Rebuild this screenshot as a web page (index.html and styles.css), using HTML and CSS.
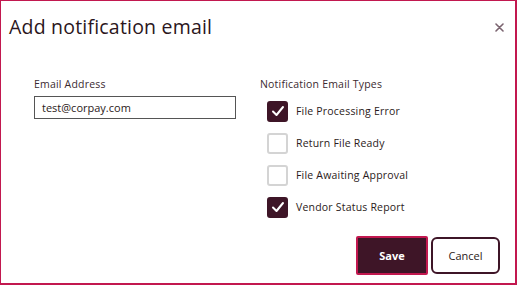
FILE: index.html
```html
<!DOCTYPE html>
<html>
<head>
<meta charset="utf-8">
<link rel="stylesheet" href="styles.css">
</head>
<body>
<div class="dialog">
  <div class="header">
    <h1 class="title">Add notification email</h1>
    <button class="close" aria-label="Close">
      <svg width="9" height="9" viewBox="0 0 9 9"><path d="M1 1L8 8M8 1L1 8" stroke="#7b6470" stroke-width="1.6" stroke-linecap="round"/></svg>
    </button>
  </div>
  <div class="body">
    <div class="col-email">
      <label class="label">Email Address</label>
      <div class="input">test@corpay.com</div>
    </div>
    <div class="col-types">
      <div class="label types-label">Notification Email Types</div>
      <div class="list">
        <div class="row"><span class="cb checked"><svg width="14" height="12" viewBox="0 0 14 12"><path d="M2 6.5L5.5 10L12 2" fill="none" stroke="#fff" stroke-width="2" stroke-linecap="round" stroke-linejoin="round"/></svg></span><span class="row-text">File Processing Error</span></div>
        <div class="row"><span class="cb"></span><span class="row-text">Return File Ready</span></div>
        <div class="row"><span class="cb"></span><span class="row-text">File Awaiting Approval</span></div>
        <div class="row"><span class="cb checked"><svg width="14" height="12" viewBox="0 0 14 12"><path d="M2 6.5L5.5 10L12 2" fill="none" stroke="#fff" stroke-width="2" stroke-linecap="round" stroke-linejoin="round"/></svg></span><span class="row-text">Vendor Status Report</span></div>
      </div>
    </div>
  </div>
  <div class="footer">
    <button class="btn save">Save</button>
    <button class="btn cancel">Cancel</button>
  </div>
</div>
</body>
</html>
```
FILE: styles.css
```css
* { box-sizing: border-box; }
html, body { margin: 0; padding: 0; background: #fff; }
body { font-family: "Open Sans", "DejaVu Sans", sans-serif; color: #2d1a22; }
.dialog {
  width: 517px;
  height: 285px;
  border: 1px solid #c2184f;
  border-right-width: 2px;
  border-bottom-width: 2px;
  display: flex;
  flex-direction: column;
}
.header {
  display: flex;
  justify-content: space-between;
  align-items: center;
  padding: 10px 9px 0 8px;
  height: 40px;
}
.title {
  margin: 0;
  font-size: 19.5px;
  font-weight: 500;
  color: #2b1620;
  letter-spacing: 0.2px;
}
.close {
  border: 0;
  background: none;
  padding: 0;
  width: 14px;
  height: 14px;
  display: flex;
  align-items: center;
  justify-content: center;
  margin-top: 2px;
}
.body {
  display: flex;
  padding: 36px 0 0 33px;
}
.col-email { width: 226px; display: flex; flex-direction: column; }
.label {
  font-size: 10.5px;
  font-weight: 500;
  color: #3b2a30;
  letter-spacing: 0.2px;
}
.input {
  margin-top: 5px;
  width: 202px;
  height: 23px;
  border: 1px solid #555;
  font-size: 11px;
  padding: 0 7px;
  display: flex;
  align-items: center;
  color: #2b1a20;
}
.list { display: flex; flex-direction: column; margin-top: 4px; padding-left: 7px; }
.row { display: flex; align-items: center; height: 32px; }
.cb {
  width: 21px;
  height: 21px;
  border: 2px solid #d4d4d4;
  border-radius: 3px;
  display: flex;
  align-items: center;
  justify-content: center;
}
.cb.checked { background: #3e1527; border-color: #3e1527; }
.row-text { margin-left: 8px; font-size: 10.5px; font-weight: 500; color: #2b1a20; letter-spacing: 0.2px; }
.footer {
  margin-top: auto;
  display: flex;
  justify-content: flex-end;
  gap: 3px;
  padding: 0 15px 8px 0;
}
.btn {
  font-family: "Open Sans", "DejaVu Sans", sans-serif;
  font-size: 11px;
  height: 39px;
  border-radius: 2px;
}
.save {
  width: 72px;
  background: #3e1527;
  color: #fff;
  font-weight: 700;
  border: 2px solid #c2184f;
}
.cancel {
  width: 69px;
  height: 37px;
  margin-top: 1px;
  background: #fff;
  color: #2b1a20;
  font-weight: 500;
  border: 2px solid #3e1527;
  border-radius: 6px;
}
```
